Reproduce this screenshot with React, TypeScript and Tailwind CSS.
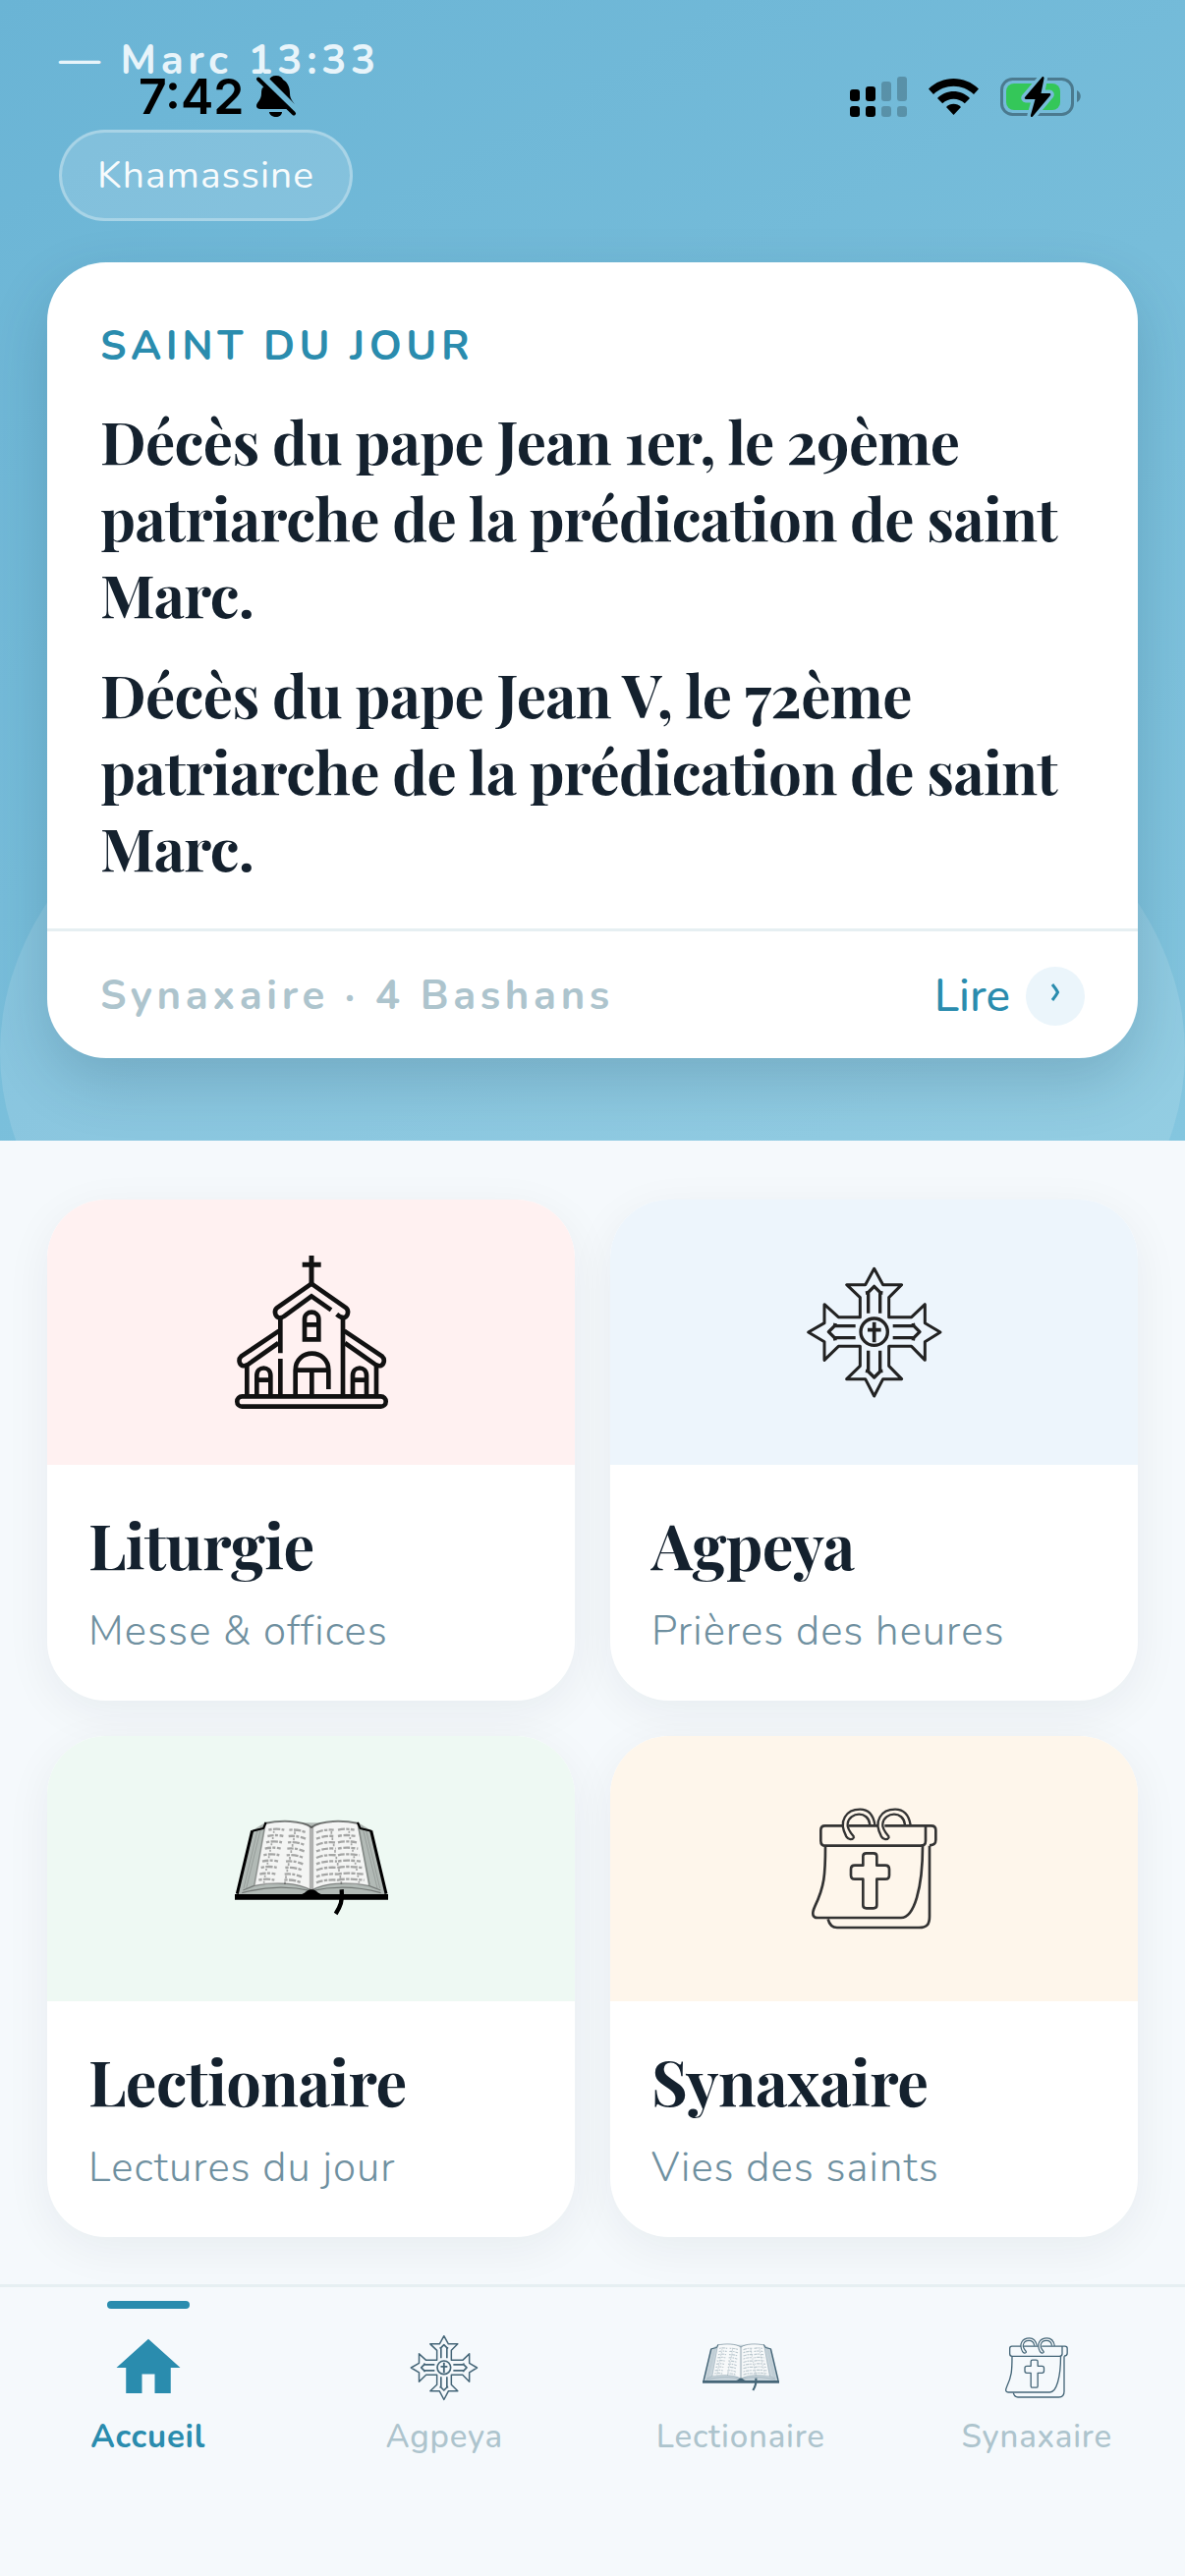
import type { ReactNode } from "react";

const sans = "font-['Nunito','Open_Sans','Noto_Sans',sans-serif]";
const serif = "font-['Playfair_Display','Liberation_Serif',serif]";

function ChurchIcon({ className }: { className: string }) {
  return (
    <svg viewBox="115 84 468 468" className={className} fill="none" stroke="currentColor" strokeWidth="14" aria-hidden="true">
      <path d="M349 84v86M321 112h57" strokeWidth="15" />
      <path d="M349 170L244 243c-10 8-7 26 4 30 6 2 12 0 18-4l83-61 60 42" />
      <path d="M349 170l105 73c10 8 7 26-4 30-8 2-16-3-24-10" />
      <path d="M254 272v110M254 399v115M445 272v242" />
      <path d="M250 314L134 392c-9 8-6 24 4 28 7 2 12 0 18-4l92-65M449 314l116 78c9 8 6 24-4 28-7 2-12 0-18-4l-92-65" />
      <path d="M152 418v96M547 418v96" />
      <path d="M328 340v-62c0-28 43-28 43 0v62zM328 295h43" />
      <path d="M300 514v-80c0-68 101-68 101 0v58M300 434h101M350 434v80" />
      <path d="M182 514v-64c0-30 42-30 42 0v64M182 464h42M475 514v-64c0-30 42-30 42 0v64M475 464h42" />
      <rect x="122" y="514" width="454" height="31" rx="15" />
    </svg>
  );
}

function CopticCrossIcon({ className }: { className: string }) {
  return (
    <svg viewBox="65 54 468 468" className={className} fill="none" stroke="currentColor" strokeLinejoin="round" aria-hidden="true">
      <path
        strokeWidth="9"
        d="M298 94l27 49h57l-39 39v60h69l41-39v57l47 28-47 29v56l-41-42h-69v60l39 40h-57l-27 52-27-52h-57l41-40v-60h-66l-43 42v-56l-49-29 49-28v-57l43 39h66v-60l-41-39h57z"
      />
      <g strokeWidth="10">
        {[0, 90, 180, 270].map((angle) => (
          <path key={angle} d="M280 230v-62h-8M316 230v-62h8M272 168l8-2 18-18 18 18 8 2" transform={`rotate(${angle} 298 287)`} />
        ))}
      </g>
      <circle cx="298" cy="287" r="41" strokeWidth="10" />
      <path d="M298 257v62M278 281h41" strokeWidth="11" />
    </svg>
  );
}

const bookRows = [128, 147, 166, 185, 205, 224, 243, 263, 281];

function BookIcon({ className }: { className: string }) {
  return (
    <svg viewBox="115 12 468 468" className={className} fill="none" stroke="currentColor" strokeLinejoin="round" aria-hidden="true">
      <path d="M167 130l40-24h285l40 24 46 194H121z" fill="currentColor" fillOpacity="0.25" stroke="none" />
      <path
        d="M210 108c45-8 105-10 139 12 34-22 94-20 139-12l35 190c-60-10-130-12-174 14-44-26-114-24-174-14z"
        fill="#fff"
        fillOpacity="0.85"
        stroke="none"
      />
      <path d="M205 108c50-10 112-10 144 12 32-22 94-22 144-12" strokeWidth="6" strokeOpacity="0.5" />
      <path d="M209 106l-34 190M490 106l36 190" strokeWidth="5" strokeOpacity="0.25" />
      <path d="M349 118v194" strokeWidth="13" strokeOpacity="0.28" />
      <path d="M140 312l34-14c62-12 132-10 175 14 43-24 113-26 175-14l36 14M137 320c80-22 150-20 212-6 62-14 132-16 212 6" strokeWidth="4" strokeOpacity="0.35" />
      <path d="M196 116l-46 190M186 122l-44 184M504 116l46 190M514 122l44 184" strokeWidth="3" strokeOpacity="0.15" />
      {bookRows.map((y, i) => {
        const spread = Math.round((y - 120) * 0.2);
        return (
          <g key={y} strokeWidth="7" strokeOpacity="0.32">
            <path
              d={`M${220 - spread} ${y}q24 -6 48 0M${282 - Math.round(spread / 2)} ${y}q26 -3 52 8`}
              strokeDasharray={i % 2 ? "19 4 9 5" : "10 4 22 4"}
            />
            <path
              d={`M364 ${y + 8}q26 -11 ${52 + Math.round(spread / 2)} -8M430 ${y}q24 -6 ${48 + spread} 0`}
              strokeDasharray={i % 2 ? "12 5 20 4" : "21 4 10 4"}
            />
            <path d={`M${300 - spread} ${y + 5}v8M${236 - spread} ${y + 3}v6M${408 + spread} ${y + 4}v8M${462 + spread} ${y + 3}v6`} strokeWidth="5" />
          </g>
        );
      })}
      <path d="M210 105l-8 18-34 8M490 105l8 18 34 8" strokeWidth="6" />
      <path d="M168 130l-46 193M531 130l46 193" strokeWidth="9" />
      <path d="M115 324h205c12-4 16-14 29-14s17 10 29 14h205v17H115z" fill="currentColor" stroke="none" />
      <path d="M441 310c4 34-4 52-18 74" strokeWidth="13" />
    </svg>
  );
}

function CalendarIcon({ className }: { className: string }) {
  return (
    <svg viewBox="65 42 468 468" className={className} fill="none" stroke="currentColor" strokeWidth="8" strokeLinejoin="round" aria-hidden="true">
      <path d="M204 145h-56c-10 0-13 4-13 13v33c0 11 4 15 14 15h290c12 0 16-4 16-15v-46M220 145h90M330 145h142c10 0 14 4 14 13v30c0 11-4 16-19 17" />
      <path d="M149 206c0 90-3 125-32 185-10 22-8 35 8 35h255c40 0 66-90 66-220" />
      <path d="M157 430c4 16 12 26 28 26h250c24 0 32-10 32-34V206" />
      <path
        d="M237 180c-6 10-18 8-24-2-26-48 0-83 42-83 26 0 40 18 45 46M237 180c-14-16-22-32-20-42 6-36 64-40 68 4M344 180c-6 10-18 8-24-2-26-48 0-83 42-83 28 0 42 18 47 48M344 180c-14-16-22-32-20-42 6-36 64-40 68 4"
        strokeWidth="7"
      />
      <path d="M264 238c0-6 4-9 10-9h22c6 0 10 3 10 9v28h26c8 0 12 5 12 12v18c0 8-4 12-12 12h-26v80c0 6-4 9-10 9h-22c-6 0-10-3-10-9v-80h-25c-8 0-12-4-12-12v-18c0-7 4-12 12-12h25z" />
    </svg>
  );
}

function HomeIcon({ className }: { className: string }) {
  return (
    <svg viewBox="0 0 24 24" className={className} fill="currentColor" aria-hidden="true">
      <path d="M10 20v-6h4v6h5v-8h3L12 3 2 12h3v8z" />
    </svg>
  );
}

function BellOffIcon() {
  return (
    <svg viewBox="0 0 40 42" className="h-[42px] w-10 overflow-visible" aria-hidden="true">
      <path d="M20 0c4 0 6 2 7 4 5 3 7 8 7 14 0 7 5 9 5 13 0 2-2 3-4 3H4c-2 0-4-1-4-3 0-4 5-6 5-13C5 12 8 7 13 4c1-2 3-4 7-4zM13 37h13c0 3-3 5-6 5s-7-2-7-5z" />
      <path d="M4 -1l38 38" stroke="#6fb8d6" strokeWidth="7" />
      <path d="M0 0h9L7 13z" fill="#6fb8d6" />
      <path d="M2 3.500l36 35" stroke="#000" strokeWidth="4" strokeLinecap="round" />
    </svg>
  );
}

function SignalIcon() {
  const columns = [
    { x: 0, top: 13, strong: true },
    { x: 16, top: 10, strong: true },
    { x: 32, top: 5, strong: false },
    { x: 48, top: 0, strong: false },
  ];
  return (
    <svg viewBox="0 0 58 41" className="h-[41px] w-[58px]" aria-hidden="true">
      {columns.map((c) => (
        <g key={c.x} fillOpacity={c.strong ? 1 : 0.22}>
          <rect x={c.x} y={c.top} width="10" height={25 - c.top} rx="3" />
          <rect x={c.x} y="30" width="10" height="11" rx="3" />
        </g>
      ))}
    </svg>
  );
}

function WifiIcon() {
  return (
    <svg viewBox="0 0 51 37" className="h-[37px] w-[51px]" aria-hidden="true">
      <path d="M0 10.500C14-3.500 37-3.500 51 10.500l-5 5.500C34.500 5 16.500 5 5 16z" />
      <path d="M9 20c9-9.300 24-9.300 33 0l-5.200 5.200c-6.200-6-16.400-6-22.600 0z" />
      <path d="M18 29c4-4.300 11-4.300 15 0l-7.500 8z" />
    </svg>
  );
}

function BatteryIcon() {
  const bolt = "M42.500 0.500L25 21c-.6 1 0 2 1 2h9.500L31 39c-.4 2 1 3 2 1.500L51 19c.6-1 0-2-1-2h-8.500l3-15c.3-1.600-1-2.500-2-1.500z";
  return (
    <svg viewBox="0 0 82 41" className="h-[41px] w-[82px]" aria-hidden="true">
      <rect x="1.500" y="2.500" width="72" height="36" rx="11" fill="none" stroke="#4b7a8f" strokeWidth="3" />
      <path d="M78 14c5 2 5 10 0 12z" fill="#4b7a8f" />
      <rect x="6" y="7" width="55" height="27" rx="8" fill="#34c759" />
      <path d={bolt} fill="#76bcd8" stroke="#76bcd8" strokeWidth="7" />
      <path d={bolt} fill="#000" />
    </svg>
  );
}

function StatusBar() {
  return (
    <div className="absolute inset-x-0 top-[72px] z-20 flex h-[52px] items-center justify-between pr-[106px] pl-[141px] text-black">
      <div className="flex items-center gap-3">
        <span className="font-['Inter',sans-serif] text-[50px] leading-none font-semibold">7:42</span>
        <BellOffIcon />
      </div>
      <div className="flex items-center gap-[22px]">
        <SignalIcon />
        <WifiIcon />
        <BatteryIcon />
      </div>
    </div>
  );
}

function SaintCard() {
  return (
    <article className="relative rounded-[60px] bg-white shadow-[0_24px_60px_rgba(20,60,85,0.2)]">
      <div className="px-[54px] pt-14 pb-11">
        <h2 className="text-[42px] leading-[60px] font-bold tracking-[0.11em] text-[#2a8cae]">SAINT DU JOUR</h2>
        <div className={`mt-[26px] flex flex-col gap-6 text-[60px] leading-[78px] font-bold tracking-[-0.01em] text-[#14212e] ${serif}`}>
          <p>Décès du pape Jean 1er, le 29ème patriarche de la prédication de saint Marc.</p>
          <p>Décès du pape Jean V, le 72ème patriarche de la prédication de saint Marc.</p>
        </div>
      </div>
      <div className="flex items-center justify-between border-t-[3px] border-[#e6eff2] px-[54px] pt-9 pb-[33px]">
        <span className="text-[42px] leading-[60px] font-bold tracking-[0.11em] text-[#adc4cd]">Synaxaire · 4 Bashans</span>
        <button type="button" className="flex items-center gap-4 text-[46px] leading-[60px] font-medium text-[#2a8cae]">
          Lire
          <span className="flex size-[60px] items-center justify-center rounded-full bg-[#ebf5fb]">
            <svg viewBox="0 0 10 18" className="mb-2 h-[18px] w-[10px]" aria-hidden="true">
              <path d="M2 1q4 5 5.500 8Q6 12 2 17" fill="none" stroke="currentColor" strokeWidth="3" />
            </svg>
          </span>
        </button>
      </div>
    </article>
  );
}

function Tile({ title, subtitle, tone, icon }: { title: string; subtitle: string; tone: string; icon: ReactNode }) {
  return (
    <a href="#" className="block rounded-[60px] bg-white shadow-[0_12px_48px_rgba(20,40,55,0.06)]">
      <div className={`flex h-[270px] items-center justify-center rounded-t-[60px] ${tone}`}>{icon}</div>
      <div className="px-[42px] pt-[42px] pb-[39px]">
        <h3 className={`text-[63px] leading-[78px] font-bold tracking-[-0.01em] text-[#14212e] ${serif}`}>{title}</h3>
        <p className="mt-[18px] text-[42px] leading-[63px] font-light tracking-wide text-[#6f90a0]">{subtitle}</p>
      </div>
    </a>
  );
}

function NavItem({ label, icon, active = false }: { label: string; icon: ReactNode; active?: boolean }) {
  return (
    <a href="#" aria-current={active ? "page" : undefined} className="flex flex-col items-center pt-[14px]">
      <span className={`h-2 w-[84px] rounded-full ${active ? "bg-[#2a8cae]" : "bg-transparent"}`} />
      <span className={`mt-[21px] ${active ? "text-[#2a8cae]" : "text-[#456678]"}`}>{icon}</span>
      <span className={`mt-2 text-[33px] leading-[48px] tracking-wide ${active ? "font-bold text-[#2a8cae]" : "font-medium text-[#adc4cd]"}`}>{label}</span>
    </a>
  );
}

export default function App() {
  return (
    <div className={`relative flex min-h-screen flex-col bg-[#f5f9fc] ${sans}`}>
      <StatusBar />
      <header className="relative overflow-hidden bg-linear-150 from-[#6ab4d5] to-[#84c6df] px-12 pb-[84px]">
        <div className="absolute inset-x-0 -bottom-[300px] h-[780px] rounded-[50%] bg-white/12" />
        <div className="relative px-3 pt-8">
          <p className="text-[42px] leading-[60px] font-bold tracking-[0.11em] text-[#e8f4fa]">— Marc 13:33</p>
        </div>
        <div className="relative mt-10 flex px-3">
          <span className="rounded-full border-[3px] border-white/30 bg-white/15 px-9 py-4 text-[39px] leading-[55px] tracking-wide text-white/95">
            Khamassine
          </span>
        </div>
        <div className="mt-[42px]">
          <SaintCard />
        </div>
      </header>
      <main className="grid grid-cols-2 gap-9 px-12 pt-[60px] pb-12">
        <Tile title="Liturgie" subtitle="Messe & offices" tone="bg-[#fff1f1]" icon={<ChurchIcon className="size-[156px] text-[#111]" />} />
        <Tile title="Agpeya" subtitle="Prières des heures" tone="bg-[#edf5fc]" icon={<CopticCrossIcon className="size-[156px] text-[#222]" />} />
        <Tile title="Lectionaire" subtitle="Lectures du jour" tone="bg-[#eef9f3]" icon={<BookIcon className="size-[156px] text-black" />} />
        <Tile title="Synaxaire" subtitle="Vies des saints" tone="bg-[#fef6eb]" icon={<CalendarIcon className="size-[156px] text-[#333]" />} />
      </main>
      <nav className="relative grid grow grid-cols-4 border-t-[3px] border-[#e6eff2] bg-[#f5f9fc] pb-28" aria-label="Navigation principale">
        <NavItem active label="Accueil" icon={<HomeIcon className="size-[78px]" />} />
        <NavItem label="Agpeya" icon={<CopticCrossIcon className="size-[78px]" />} />
        <NavItem label="Lectionaire" icon={<BookIcon className="size-[78px]" />} />
        <NavItem label="Synaxaire" icon={<CalendarIcon className="size-[78px]" />} />
      </nav>
    </div>
  );
}
